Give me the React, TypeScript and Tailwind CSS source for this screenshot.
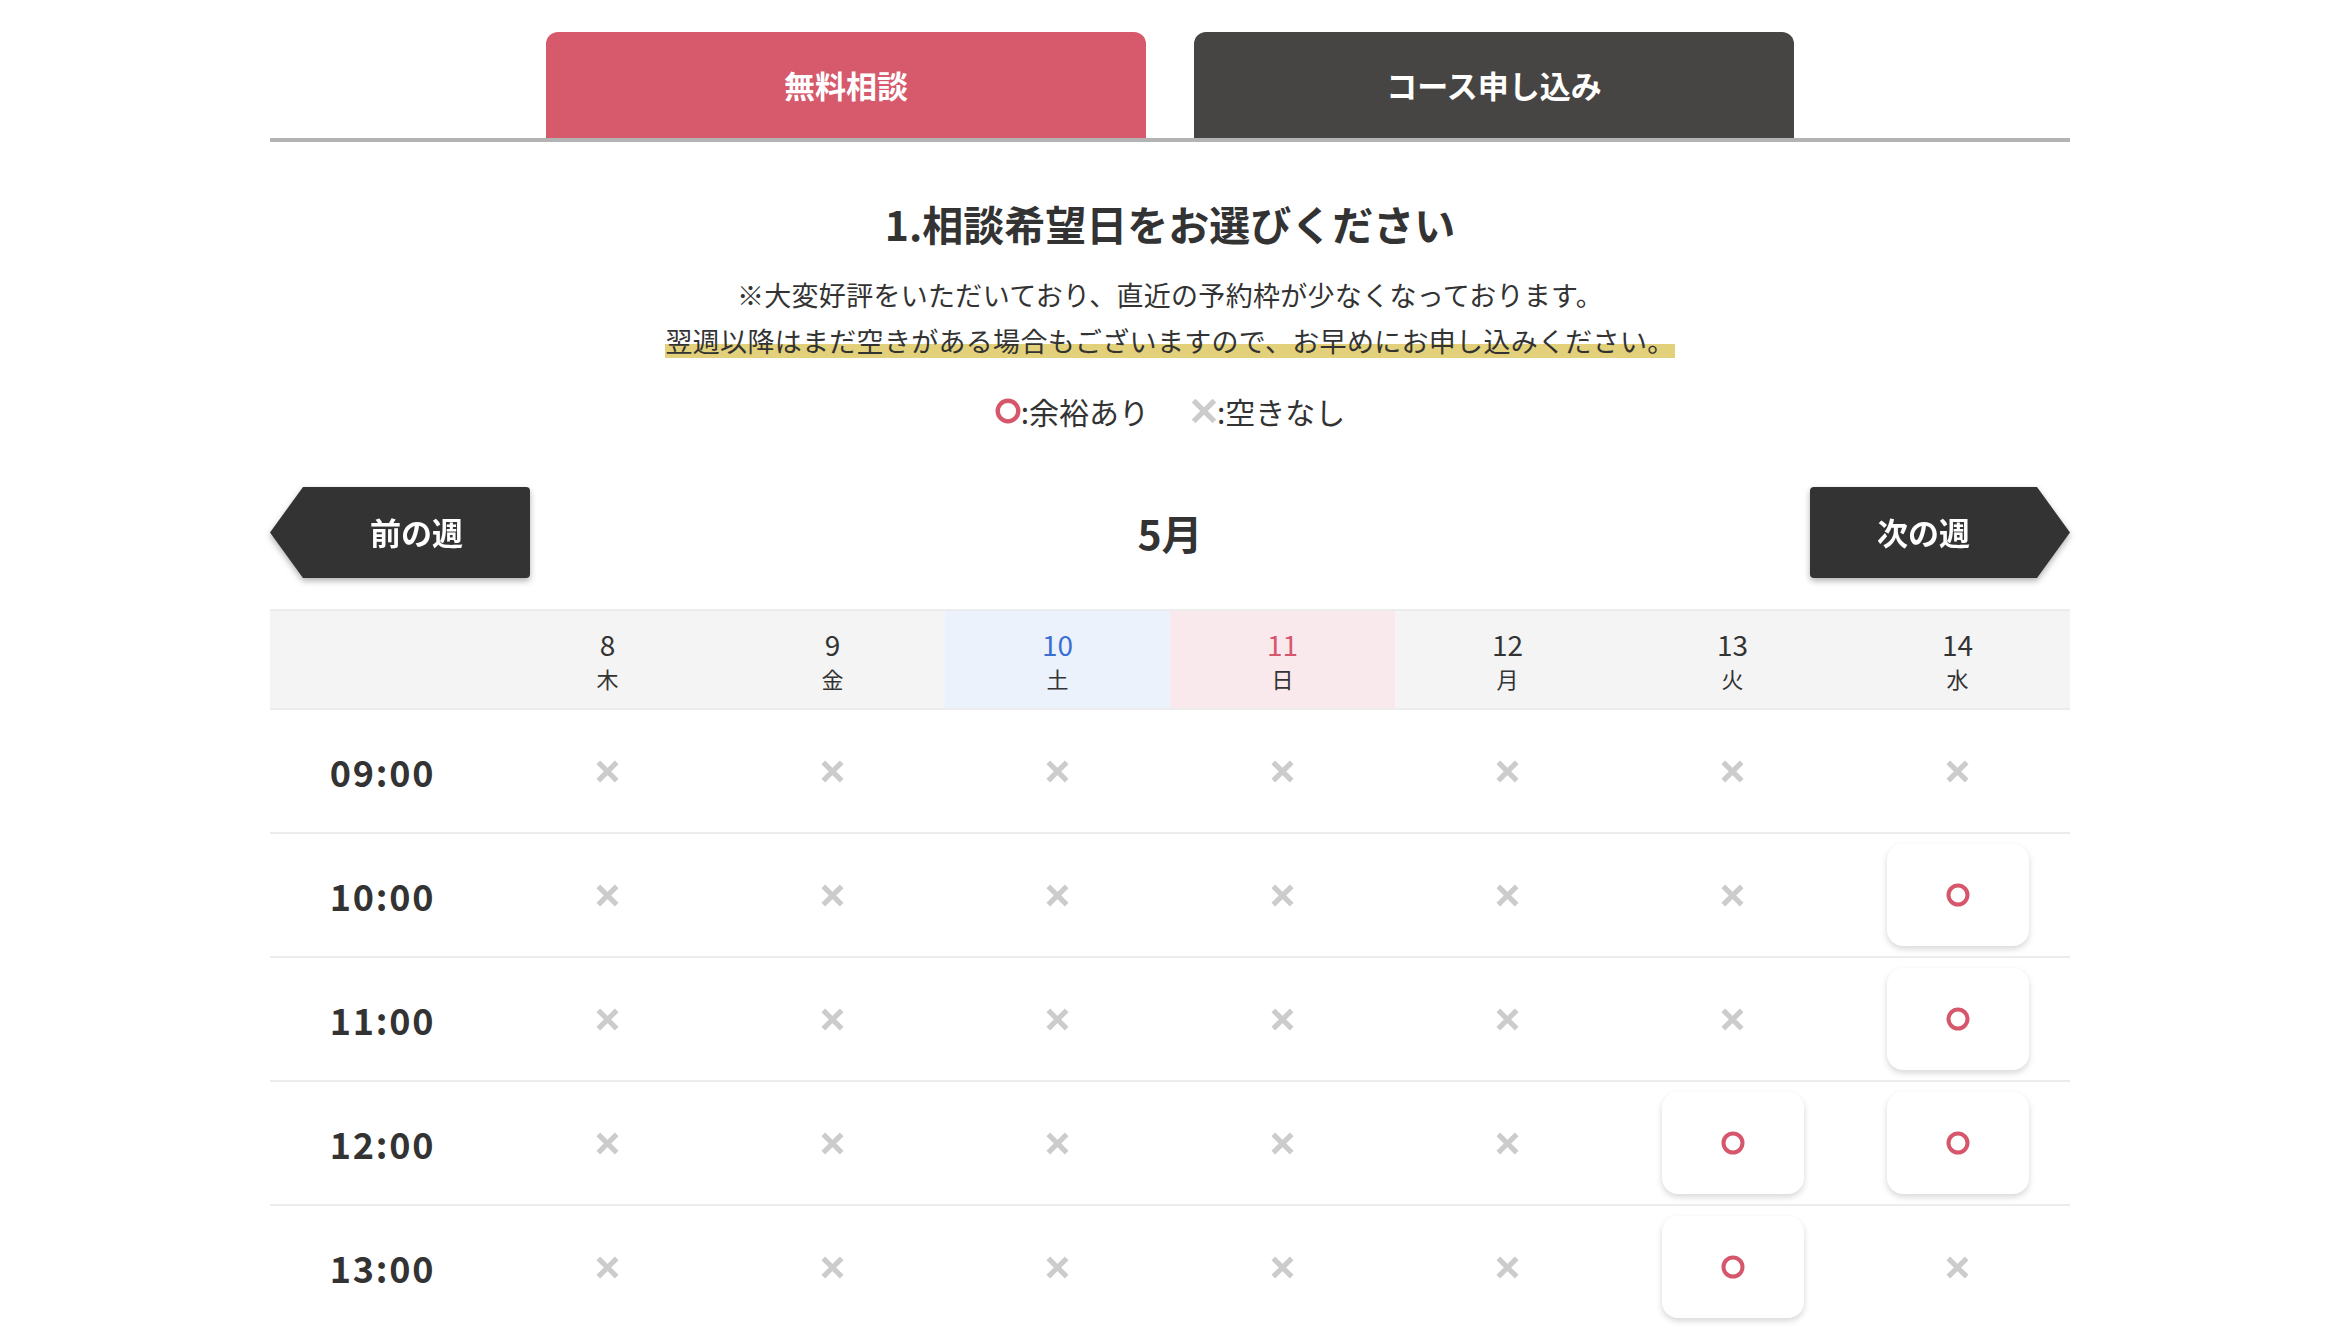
import React from 'react';

const FONT = '"Noto Sans CJK JP", "Noto Sans", sans-serif';

const DAYS = [
  { d: '8', w: '木', kind: '' },
  { d: '9', w: '金', kind: '' },
  { d: '10', w: '土', kind: 'sat' },
  { d: '11', w: '日', kind: 'sun' },
  { d: '12', w: '月', kind: '' },
  { d: '13', w: '火', kind: '' },
  { d: '14', w: '水', kind: '' },
];

// open slots per time (index of day column)
const ROWS: { time: string; open: number[] }[] = [
  { time: '09:00', open: [] },
  { time: '10:00', open: [6] },
  { time: '11:00', open: [6] },
  { time: '12:00', open: [5, 6] },
  { time: '13:00', open: [5] },
];

const Cross = ({ size = 21, stroke = 5 }: { size?: number; stroke?: number }) => (
  <svg width={size} height={size} viewBox="0 0 20 20">
    <path d="M2 2 L18 18 M18 2 L2 18" stroke="#cccccc" strokeWidth={stroke} />
  </svg>
);

const Ring = ({ size = 24 }: { size?: number }) => (
  <svg width={size} height={size} viewBox="0 0 24 24">
    <circle cx="12" cy="12" r="9.5" fill="none" stroke="#d6566b" strokeWidth="4" />
  </svg>
);

const App = () => {
  return (
    <div className="min-h-screen bg-white text-[#333]" style={{ fontFamily: FONT }}>
      <div className="w-[1800px] ml-[270px]">
        {/* Tabs */}
        <div className="flex justify-center gap-[48px] pt-[32px] border-b-4 border-[#b3b3b3]">
          <div className="w-[600px] h-[106px] rounded-t-[12px] bg-[#d6596c] flex items-center justify-center text-white text-[31px] font-bold">
            無料相談
          </div>
          <div className="w-[600px] h-[106px] rounded-t-[12px] bg-[#474543] flex items-center justify-center text-white text-[31px] font-bold">
            コース申し込み
          </div>
        </div>

        {/* Heading */}
        <h2 className="mt-[51px] text-center text-[41px] leading-[60px] font-bold">1.相談希望日をお選びください</h2>
        <div className="mt-[19px] text-center text-[27px] leading-[46px] tracking-[0.3px]">
          <p>※大変好評をいただいており、直近の予約枠が少なくなっております。</p>
          <p>
            <span className="bg-[linear-gradient(transparent_58%,#e2d07a_58%,#e2d07a_96%,transparent_96%)]">
              翌週以降はまだ空きがある場合もございますので、お早めにお申し込みください。
            </span>
          </p>
        </div>

        {/* Legend */}
        <div className="mt-[25px] flex justify-center items-center gap-[42px] text-[30px] leading-[44px]">
          <div className="flex items-center">
            <Ring size={26} />
            <span>:余裕あり</span>
          </div>
          <div className="flex items-center">
            <Cross size={26} stroke={4} />
            <span>:空きなし</span>
          </div>
        </div>

        {/* Week nav */}
        <div className="mt-[54px] flex items-center justify-between">
          <div className="drop-shadow-[0_3px_3px_rgba(0,0,0,0.3)]">
            <button className="w-[260px] h-[91px] pl-[33px] bg-[#333] text-white text-[31px] font-bold flex items-center justify-center [clip-path:polygon(33px_0,100%_0,100%_100%,33px_100%,0_50%)] rounded-r-[4px]">
              前の週
            </button>
          </div>
          <div className="text-[41px] font-bold">5月</div>
          <div className="drop-shadow-[0_3px_3px_rgba(0,0,0,0.3)]">
            <button className="w-[260px] h-[91px] pr-[33px] bg-[#333] text-white text-[31px] font-bold flex items-center justify-center [clip-path:polygon(0_0,227px_0,100%_50%,227px_100%,0_100%)] rounded-l-[4px]">
              次の週
            </button>
          </div>
        </div>

        {/* Calendar */}
        <div className="mt-[31px]">
          <div className="grid grid-cols-8 h-[101px] bg-[#f4f4f4] border-y-2 border-[#ececec]">
            <div />
            {DAYS.map((day) => (
              <div
                key={day.d}
                className={
                  'flex flex-col items-center justify-center ' +
                  (day.kind === 'sat' ? 'bg-[#ebf2fc]' : day.kind === 'sun' ? 'bg-[#f9e9ec]' : '')
                }
              >
                <span
                  className={
                    'text-[28px] leading-[36px] ' +
                    (day.kind === 'sat' ? 'text-[#3b6fd4]' : day.kind === 'sun' ? 'text-[#d6566b]' : 'text-[#333]')
                  }
                >
                  {day.d}
                </span>
                <span className="text-[#333] text-[22px] leading-[32px]">{day.w}</span>
              </div>
            ))}
          </div>

          {ROWS.map((row) => (
            <div key={row.time} className="grid grid-cols-8 h-[124px] border-b-2 border-[#ececec]">
              <div className="flex items-center justify-center text-[36px] font-bold tracking-[0.05em]">{row.time}</div>
              {DAYS.map((day, i) => (
                <div key={day.d} className="flex items-center justify-center">
                  {row.open.includes(i) ? (
                    <button className="w-[142px] h-[102px] rounded-[16px] bg-white shadow-[0_3px_6px_rgba(0,0,0,0.16)] flex items-center justify-center">
                      <Ring size={24} />
                    </button>
                  ) : (
                    <Cross size={23} stroke={4.5} />
                  )}
                </div>
              ))}
            </div>
          ))}
        </div>
      </div>
    </div>
  );
};

export default App;
